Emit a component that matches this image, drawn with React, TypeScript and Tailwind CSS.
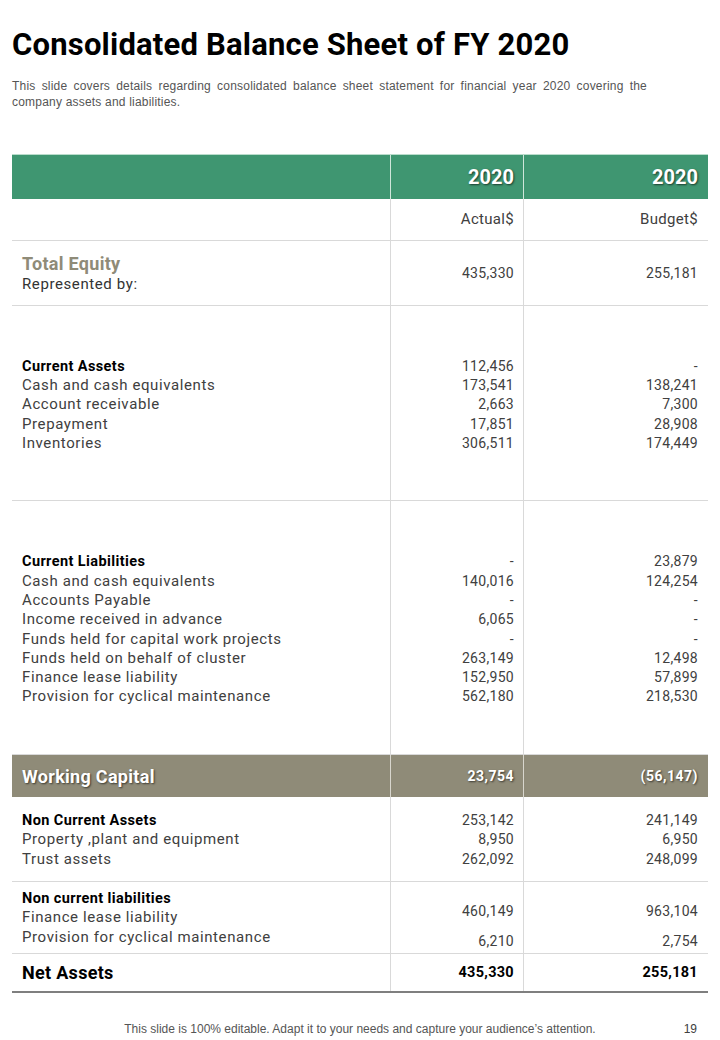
const sans = "font-['Roboto','Liberation_Sans',sans-serif]"

type Line = { label: string; bold?: boolean; a: string; b: string }

const currentAssets: Line[] = [
  { label: "Current Assets", bold: true, a: "112,456", b: "-" },
  { label: "Cash and cash equivalents", a: "173,541", b: "138,241" },
  { label: "Account receivable", a: "2,663", b: "7,300" },
  { label: "Prepayment", a: "17,851", b: "28,908" },
  { label: "Inventories", a: "306,511", b: "174,449" },
]

const currentLiabilities: Line[] = [
  { label: "Current Liabilities", bold: true, a: "-", b: "23,879" },
  { label: "Cash and cash equivalents", a: "140,016", b: "124,254" },
  { label: "Accounts Payable", a: "-", b: "-" },
  { label: "Income received in advance", a: "6,065", b: "-" },
  { label: "Funds held for capital work projects", a: "-", b: "-" },
  { label: "Funds held on behalf of cluster", a: "263,149", b: "12,498" },
  { label: "Finance lease liability", a: "152,950", b: "57,899" },
  { label: "Provision for cyclical maintenance", a: "562,180", b: "218,530" },
]

const nonCurrentAssets: Line[] = [
  { label: "Non Current Assets", bold: true, a: "253,142", b: "241,149" },
  { label: "Property ,plant and equipment", a: "8,950", b: "6,950" },
  { label: "Trust assets", a: "262,092", b: "248,099" },
]

const shadow = "[text-shadow:1px_1px_2px_rgba(0,0,0,0.6)]"
const label = "text-[15px] tracking-[0.6px] text-[#404040]"
const heading = "text-[14.5px] font-bold tracking-[0.4px] text-black"
const num = "text-[14px] tracking-[0.3px] text-[#404040]"

const Block = ({ lines, h, pt }: { lines: Line[]; h: string; pt: string }) => (
  <div className={`grid grid-cols-[378px_133px_185px] border-b border-[#d9d9d9] leading-[19.3px] ${h}`}>
    <div className={`flex flex-col justify-center pl-[10px] ${pt}`}>
      {lines.map((l) => (
        <span key={l.label} className={l.bold ? heading : label}>
          {l.label}
        </span>
      ))}
    </div>
    <div className={`flex flex-col justify-center items-end pr-[9px] border-l border-[#d9d9d9] ${num} ${pt}`}>
      {lines.map((l, i) => (
        <span key={i}>{l.a}</span>
      ))}
    </div>
    <div className={`flex flex-col justify-center items-end pr-[10px] border-l border-[#d9d9d9] ${num} ${pt}`}>
      {lines.map((l, i) => (
        <span key={i}>{l.b}</span>
      ))}
    </div>
  </div>
)

export default function App() {
  return (
    <div className={`w-[720px] h-[1040px] bg-white ${sans} overflow-hidden`}>
      <div className="px-[12px] pt-[26px]">
        <h1 className="text-[31px] leading-[38px] font-bold tracking-[0.2px] text-black">
          Consolidated Balance Sheet of FY 2020
        </h1>
        <p className="mt-[14px] w-[635px] text-justify font-['Liberation_Sans',sans-serif] text-[12px] leading-[16px] tracking-[0.2px] text-[#555555]">
          This slide covers details regarding consolidated balance sheet statement for financial year 2020 covering the company assets and liabilities.
        </p>
      </div>

      <div className="mx-[12px] mt-[44px] w-[696px]">
        {/* header */}
        <div className="grid grid-cols-[378px_133px_185px] h-[45px] bg-[#3f9671] border-t border-[#b9dccb]">
          <div />
          <div className={`flex items-center justify-end pr-[9px] border-l border-[#cfe6da] text-white font-bold text-[20px] ${shadow}`}>2020</div>
          <div className={`flex items-center justify-end pr-[10px] border-l border-[#cfe6da] text-white font-bold text-[20px] ${shadow}`}>2020</div>
        </div>

        <div className="grid grid-cols-[378px_133px_185px] h-[42px] border-b border-[#d9d9d9] text-[15px] tracking-[0.3px] text-[#404040]">
          <div />
          <div className="flex items-center justify-end pr-[9px] border-l border-[#d9d9d9]">Actual$</div>
          <div className="flex items-center justify-end pr-[10px] border-l border-[#d9d9d9]">Budget$</div>
        </div>

        <div className="grid grid-cols-[378px_133px_185px] h-[65px] border-b border-[#d9d9d9]">
          <div className="flex flex-col justify-center pl-[10px] pt-[1px]">
            <span className="text-[18px] leading-[21px] font-bold tracking-[0.3px] text-[#8f8b78]">Total Equity</span>
            <span className="text-[15px] leading-[20px] tracking-[0.6px] text-[#333333]">Represented by:</span>
          </div>
          <div className={`flex items-center justify-end pr-[9px] border-l border-[#d9d9d9] ${num}`}>435,330</div>
          <div className={`flex items-center justify-end pr-[10px] border-l border-[#d9d9d9] ${num}`}>255,181</div>
        </div>

        <Block lines={currentAssets} h="h-[195px]" pt="pt-[4px]" />
        <Block lines={currentLiabilities} h="h-[254px]" pt="pt-[4px]" />

        <div className="grid grid-cols-[378px_133px_185px] h-[42px] bg-[#8f8b78] text-white">
          <div className={`flex items-center pl-[10px] text-[18px] font-bold tracking-[0.3px] ${shadow}`}>Working Capital</div>
          <div className={`flex items-center justify-end pr-[9px] border-l border-[#d8d6cd] text-[14px] font-bold tracking-[0.5px] ${shadow}`}>23,754</div>
          <div className={`flex items-center justify-end pr-[10px] border-l border-[#d8d6cd] text-[14px] font-bold tracking-[0.5px] ${shadow}`}>(56,147)</div>
        </div>

        <Block lines={nonCurrentAssets} h="h-[85px]" pt="pt-[2px]" />

        <div className="grid grid-cols-[378px_133px_185px] h-[72px] border-b border-[#d9d9d9] leading-[19.3px]">
          <div className="flex flex-col justify-center pl-[10px] pt-[1px]">
            <span className={heading}>Non current liabilities</span>
            <span className={label}>Finance lease liability</span>
            <span className={label}>Provision for cyclical maintenance</span>
          </div>
          <div className={`flex flex-col justify-center items-end gap-[10px] pt-[18px] pr-[9px] border-l border-[#d9d9d9] ${num}`}>
            <span>460,149</span>
            <span>6,210</span>
          </div>
          <div className={`flex flex-col justify-center items-end gap-[10px] pt-[18px] pr-[10px] border-l border-[#d9d9d9] ${num}`}>
            <span>963,104</span>
            <span>2,754</span>
          </div>
        </div>

        <div className="grid grid-cols-[378px_133px_185px] h-[39px] border-b-2 border-[#7f7f7f] text-black">
          <div className="flex items-center pl-[10px] text-[18px] font-bold tracking-[0.3px]">Net Assets</div>
          <div className="flex items-center justify-end pr-[9px] border-l border-[#d9d9d9] text-[14.5px] font-bold tracking-[0.3px]">435,330</div>
          <div className="flex items-center justify-end pr-[10px] border-l border-[#d9d9d9] text-[14.5px] font-bold tracking-[0.3px]">255,181</div>
        </div>
      </div>

      <div className="mt-[28px] grid grid-cols-[1fr_auto_1fr] items-center font-['Liberation_Sans',sans-serif] text-[#555555]">
        <div />
        <p className="text-[12px] leading-[16px]">
          This slide is 100% editable. Adapt it to your needs and capture your audience’s attention.
        </p>
        <p className="text-right pr-[23px] text-[12px] leading-[16px] text-[#404040]">19</p>
      </div>
    </div>
  )
}
